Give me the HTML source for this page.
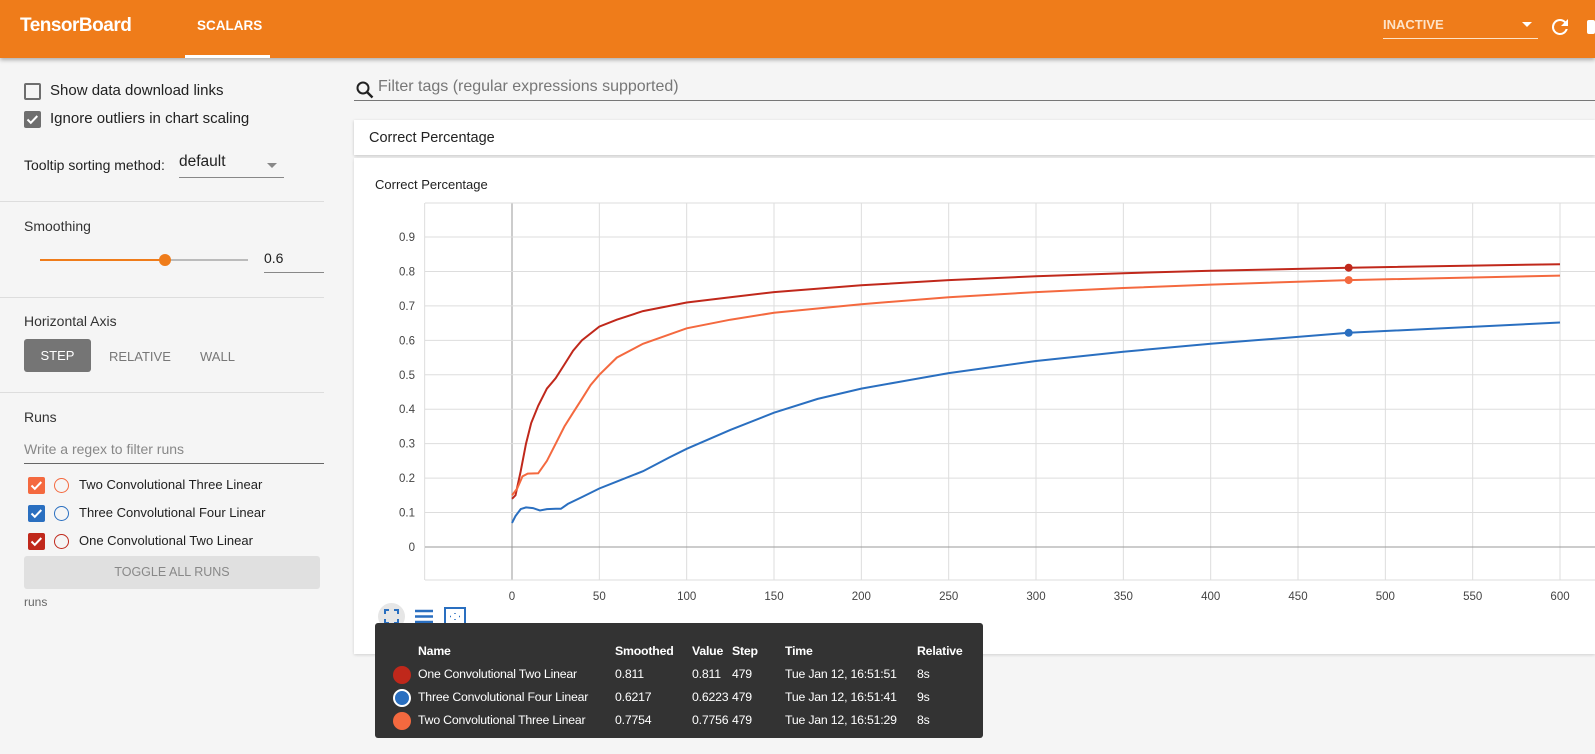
<!DOCTYPE html>
<html><head><meta charset="utf-8">
<style>
*{box-sizing:border-box;margin:0;padding:0}
body{width:1595px;height:754px;overflow:hidden;background:#f5f5f5;font-family:"Liberation Sans",Arial,sans-serif;position:relative;color:#212121}
.abs{position:absolute;white-space:nowrap}
#hdr{position:absolute;left:0;top:0;width:1595px;height:58px;background:#ef7c1a;box-shadow:0 2px 4px rgba(0,0,0,.3);z-index:2}
.div{position:absolute;left:0;width:324px;height:1px;background:#ddd}
.cb{position:absolute;width:17px;height:17px;border-radius:2px}
.circ{position:absolute;width:15px;height:15px;border-radius:50%;border:1.5px solid}
.tt span{position:absolute;color:#fff;font-size:12.3px;white-space:nowrap;letter-spacing:-0.2px}
.tt .h{font-weight:bold}
.tt .d{position:absolute;left:18px;width:18px;height:18px;border-radius:50%}
</style></head><body>
<div id="hdr">
 <div class="abs" style="left:20px;top:15px;font-size:19px;font-weight:bold;color:#fff;letter-spacing:-0.5px">TensorBoard</div>
 <div class="abs" style="left:197px;top:18px;font-size:13.5px;font-weight:bold;color:#fff">SCALARS</div>
 <div class="abs" style="left:185px;top:55px;width:85px;height:3px;background:#fff"></div>
 <div class="abs" style="left:1383px;top:17px;font-size:13px;font-weight:bold;color:#fde3c8">INACTIVE</div>
 <div class="abs" style="left:1522px;top:22px;width:0;height:0;border-left:5px solid transparent;border-right:5px solid transparent;border-top:5px solid #fff"></div>
 <div class="abs" style="left:1383px;top:38px;width:155px;height:1px;background:#fde3c8"></div>
 <svg class="abs" style="left:1548px;top:15px" width="24" height="24" viewBox="0 0 24 24"><path fill="#fff" d="M17.65 6.35A7.960 7.960 0 0 0 12 4a8 8 0 1 0 7.73 10h-2.080A6 6 0 1 1 12 6c1.66 0 3.14.69 4.22 1.78L13 11h7V4l-2.35 2.35z"/></svg>
 <div class="abs" style="left:1587px;top:20px;width:8px;height:14px;background:#fff;border-radius:2px"></div>
</div>

<div class="cb" style="left:24px;top:83px;border:2px solid #6e6e6e"></div>
<div class="abs" style="left:50px;top:82px;font-size:15px">Show data download links</div>
<div class="cb" style="left:24px;top:111px;background:#6e6e6e"><svg width="17" height="17" viewBox="0 0 17 17"><path d="M3.5 8.5l3.3 3.3 6.5-6.8" stroke="#fff" stroke-width="2" fill="none"/></svg></div>
<div class="abs" style="left:50px;top:110px;font-size:15px">Ignore outliers in chart scaling</div>
<div class="abs" style="left:24px;top:157px;font-size:14px">Tooltip sorting method:</div>
<div class="abs" style="left:179px;top:153px;font-size:15.5px">default</div>
<div class="abs" style="left:267px;top:163px;border-left:5px solid transparent;border-right:5px solid transparent;border-top:5px solid #888"></div>
<div class="abs" style="left:179px;top:177px;width:105px;height:1px;background:#888"></div>
<div class="div" style="top:201px"></div>
<div class="abs" style="left:24px;top:218px;font-size:14px;color:#333">Smoothing</div>
<div class="abs" style="left:40px;top:259px;width:125px;height:2px;background:#ef7c1a"></div>
<div class="abs" style="left:165px;top:259px;width:83px;height:2px;background:#bbb"></div>
<div class="abs" style="left:159px;top:254px;width:12px;height:12px;border-radius:50%;background:#ef7c1a"></div>
<div class="abs" style="left:264px;top:250px;font-size:14px">0.6</div>
<div class="abs" style="left:264px;top:272px;width:60px;height:1px;background:#888"></div>
<div class="div" style="top:297px"></div>
<div class="abs" style="left:24px;top:313px;font-size:14px;color:#333">Horizontal Axis</div>
<div class="abs" style="left:24px;top:339px;width:67px;height:33px;background:#757575;border-radius:3px;color:#fff;font-size:13px;text-align:center;line-height:33px">STEP</div>
<div class="abs" style="left:109px;top:349px;font-size:13px;color:#777">RELATIVE</div>
<div class="abs" style="left:200px;top:349px;font-size:13px;color:#777">WALL</div>
<div class="div" style="top:392px"></div>
<div class="abs" style="left:24px;top:409px;font-size:14px;color:#333">Runs</div>
<div class="abs" style="left:24px;top:441px;font-size:14px;color:#888">Write a regex to filter runs</div>
<div class="abs" style="left:24px;top:463px;width:300px;height:1px;background:#666"></div>

<div class="cb" style="left:28px;top:477px;background:#f4693f"><svg width="17" height="17" viewBox="0 0 17 17"><path d="M3.5 8.5l3.3 3.3 6.5-6.8" stroke="#fff" stroke-width="2" fill="none"/></svg></div>
<div class="circ" style="left:54px;top:478px;border-color:#f4693f"></div>
<div class="abs" style="left:79px;top:477px;font-size:13px">Two Convolutional Three Linear</div>
<div class="cb" style="left:28px;top:505px;background:#2a6fc0"><svg width="17" height="17" viewBox="0 0 17 17"><path d="M3.5 8.5l3.3 3.3 6.5-6.8" stroke="#fff" stroke-width="2" fill="none"/></svg></div>
<div class="circ" style="left:54px;top:506px;border-color:#2a6fc0"></div>
<div class="abs" style="left:79px;top:505px;font-size:13px">Three Convolutional Four Linear</div>
<div class="cb" style="left:28px;top:533px;background:#c0281b"><svg width="17" height="17" viewBox="0 0 17 17"><path d="M3.5 8.5l3.3 3.3 6.5-6.8" stroke="#fff" stroke-width="2" fill="none"/></svg></div>
<div class="circ" style="left:54px;top:534px;border-color:#c0281b"></div>
<div class="abs" style="left:79px;top:533px;font-size:13px">One Convolutional Two Linear</div>
<div class="abs" style="left:24px;top:556px;width:296px;height:33px;background:#e0e0e0;border-radius:3px;color:#888;font-size:12.5px;text-align:center;line-height:33px">TOGGLE ALL RUNS</div>
<div class="abs" style="left:24px;top:595px;font-size:12px;color:#666">runs</div>

<svg class="abs" style="left:355px;top:80px" width="20" height="20" viewBox="0 0 20 20"><circle cx="8" cy="8" r="5.5" stroke="#222" stroke-width="2" fill="none"/><path d="M12 12l5.5 5.5" stroke="#222" stroke-width="2.4"/></svg>
<div class="abs" style="left:378px;top:78px;font-size:16px;color:#777">Filter tags (regular expressions supported)</div>
<div class="abs" style="left:354px;top:100px;width:1241px;height:1px;background:#777"></div>
<div class="abs" style="left:354px;top:120px;width:1241px;height:35px;background:#fff;box-shadow:0 1px 3px rgba(0,0,0,.2)"></div>
<div class="abs" style="left:369px;top:130px;font-size:14.5px;color:#222">Correct Percentage</div>
<div class="abs" style="left:354px;top:158px;width:1241px;height:496px;background:#fff;box-shadow:0 1px 3px rgba(0,0,0,.15)"></div>
<div class="abs" style="left:375px;top:177px;font-size:13px;color:#222">Correct Percentage</div>
<svg id="ch" class="abs" style="left:0;top:0" width="1595" height="754"></svg>

<div class="abs" style="left:378px;top:603px;width:27px;height:27px;border-radius:50%;background:#e6e6e6"></div>
<svg class="abs" style="left:383px;top:608px" width="17" height="17" viewBox="0 0 17 17"><path d="M2 6V2h4M11 2h4v4M15 11v4h-4M6 15H2v-4" stroke="#2a6fc0" stroke-width="2" fill="none"/></svg>
<svg class="abs" style="left:414px;top:608px" width="20" height="17" viewBox="0 0 20 17"><path d="M1 3h18M1 8.5h18M1 14h18" stroke="#2a6fc0" stroke-width="2.5"/></svg>
<svg class="abs" style="left:444px;top:607px" width="22" height="19" viewBox="0 0 22 19"><rect x="1" y="1" width="20" height="17" stroke="#2a6fc0" stroke-width="2" fill="none"/><path d="M6 9.5h1M15 9.5h1M11 6v1M11 12v1" stroke="#2a6fc0" stroke-width="1.5"/></svg>

<div class="abs tt" style="left:375px;top:623px;width:608px;height:115px;background:#333;border-radius:3px">
 <span class="h" style="left:43px;top:21px">Name</span><span class="h" style="left:240px;top:21px">Smoothed</span><span class="h" style="left:317px;top:21px">Value</span><span class="h" style="left:357px;top:21px">Step</span><span class="h" style="left:410px;top:21px">Time</span><span class="h" style="left:542px;top:21px">Relative</span>
 <div class="d" style="top:43px;background:#c0281b"></div>
 <span style="left:43px;top:44px">One Convolutional Two Linear</span><span style="left:240px;top:44px">0.811</span><span style="left:317px;top:44px">0.811</span><span style="left:357px;top:44px">479</span><span style="left:410px;top:44px">Tue Jan 12, 16:51:51</span><span style="left:542px;top:44px">8s</span>
 <div class="d" style="top:66px;background:#2a6fc0;border:2px solid #fff"></div>
 <span style="left:43px;top:67px">Three Convolutional Four Linear</span><span style="left:240px;top:67px">0.6217</span><span style="left:317px;top:67px">0.6223</span><span style="left:357px;top:67px">479</span><span style="left:410px;top:67px">Tue Jan 12, 16:51:41</span><span style="left:542px;top:67px">9s</span>
 <div class="d" style="top:89px;background:#f4693f"></div>
 <span style="left:43px;top:90px">Two Convolutional Three Linear</span><span style="left:240px;top:90px">0.7754</span><span style="left:317px;top:90px">0.7756</span><span style="left:357px;top:90px">479</span><span style="left:410px;top:90px">Tue Jan 12, 16:51:29</span><span style="left:542px;top:90px">8s</span>
</div>

<script>
var s='',X=function(v){return 512+v*1.7467},Y=function(v){return 547-v*344.4};
for(var i=-1;i<=12;i++){var x=X(i*50);s+='<line x1="'+x+'" y1="203" x2="'+x+'" y2="580" stroke="'+(i==0?'#999':'#ddd')+'" stroke-width="1"/>';if(i>=0)s+='<text x="'+x+'" y="600" font-size="11.5" fill="#444" text-anchor="middle" font-family="Liberation Sans">'+(i*50)+'</text>';}
for(var j=0;j<=9;j++){var y=Y(j/10);s+='<line x1="425" y1="'+y+'" x2="1595" y2="'+y+'" stroke="'+(j==0?'#999':'#ddd')+'"/>';s+='<text x="415" y="'+(y+4)+'" font-size="11.5" fill="#444" text-anchor="end" font-family="Liberation Sans">'+(j==0?'0':'0.'+j)+'</text>';}
s+='<line x1="425" y1="203" x2="1595" y2="203" stroke="#ddd"/><line x1="425" y1="580" x2="1595" y2="580" stroke="#ddd"/>';
function P(d,c,dot){var p=d.map(function(q){return X(q[0]).toFixed(1)+','+Y(q[1]).toFixed(1)}).join(' ');
s+='<polyline points="'+p+'" fill="none" stroke="'+c+'" stroke-width="2"/>';s+='<circle cx="'+X(479)+'" cy="'+Y(dot)+'" r="4" fill="'+c+'"/>';}
P([[0,.14],[2,.15],[5,.22],[8,.3],[11,.36],[15,.41],[20,.46],[25,.49],[30,.53],[35,.57],[40,.6],[50,.64],[60,.66],[75,.685],[100,.71],[125,.725],[150,.74],[200,.76],[250,.775],[300,.786],[350,.795],[400,.802],[479,.811],[600,.821]],'#c0281b',.811);
P([[0,.15],[3,.17],[6,.205],[9,.213],[15,.214],[20,.25],[25,.3],[30,.35],[35,.39],[40,.43],[45,.47],[50,.5],[60,.55],[75,.59],[100,.635],[125,.66],[150,.68],[200,.705],[250,.725],[300,.74],[350,.752],[400,.762],[479,.775],[600,.788]],'#f4693f',.775);
P([[0,.07],[2,.09],[5,.11],[8,.115],[12,.113],[16,.106],[20,.11],[25,.111],[28,.111],[32,.125],[40,.145],[50,.17],[60,.19],[75,.22],[90,.26],[100,.285],[125,.34],[150,.39],[175,.43],[200,.46],[250,.505],[300,.54],[350,.567],[400,.59],[479,.622],[600,.652]],'#2a6fc0',.622);
document.getElementById('ch').innerHTML=s;
</script>
</body></html>
